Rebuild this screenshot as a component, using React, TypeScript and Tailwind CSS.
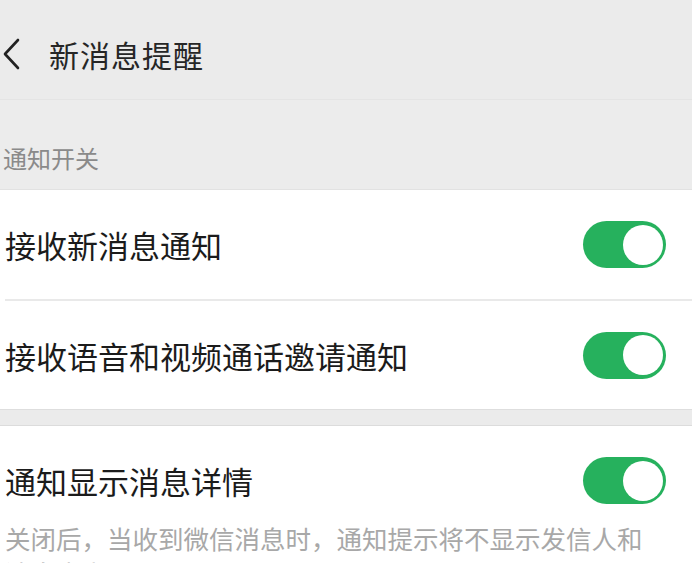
import React from "react";

const Toggle = () => (
  <div className="relative h-[47px] w-[83px] shrink-0 rounded-full bg-[#26b15d]">
    <div className="absolute right-[3px] top-[3.5px] h-[40px] w-[40px] rounded-full bg-white" />
  </div>
);

export default function App() {
  return (
    <div
      className="h-[563px] w-[692px] overflow-hidden bg-[#ececec] text-[#1b1b1b]"
      style={{ fontFamily: '"Noto Sans CJK SC", "Noto Sans", sans-serif' }}
    >
      <div className="flex h-[100px] items-center border-b border-[#e4e4e4] bg-[#ebebeb]">
        <svg width="24" height="34" viewBox="0 0 24 34" className="ml-[1px] mt-[8px]">
          <polyline points="17,3 4,17 17,31" fill="none" stroke="#222" strokeWidth="2.6" strokeLinecap="round" strokeLinejoin="round" />
        </svg>
        <div className="ml-[24px] mt-[8px] text-[30px] leading-none tracking-[1px] text-[#262626]">新消息提醒</div>
      </div>
      <div className="flex h-[89px] items-end pb-[15px] pl-[3px] text-[24px] leading-[32px] text-[#8a8a8a]">通知开关</div>
      <div className="border-t border-[#e2e2e2] bg-white">
        <div className="flex h-[109px] items-center justify-between pl-[5px] pr-[26px]">
          <div className="text-[31px] leading-none">接收新消息通知</div>
          <Toggle />
        </div>
        <div className="ml-[5px] h-[2px] bg-[#e9e9e9]" />
        <div className="flex h-[108px] items-center justify-between pl-[5px] pr-[26px]">
          <div className="text-[31px] leading-none">接收语音和视频通话邀请通知</div>
          <Toggle />
        </div>
      </div>
      <div className="h-[16px] border-t border-[#dedede] bg-[#ebebeb]" />
      <div className="border-t border-[#dcdcdc] bg-white">
        <div className="flex items-center justify-between pl-[5px] pr-[26px] pt-[31px]">
          <div className="text-[31px] leading-none">通知显示消息详情</div>
          <Toggle />
        </div>
        <div className="pl-[5px] pt-[16px] text-[25.5px] leading-[35px] text-[#a8a8a8]">
          关闭后，当收到微信消息时，通知提示将不显示发信人和
          <br />
          消息内容。
        </div>
      </div>
    </div>
  );
}
